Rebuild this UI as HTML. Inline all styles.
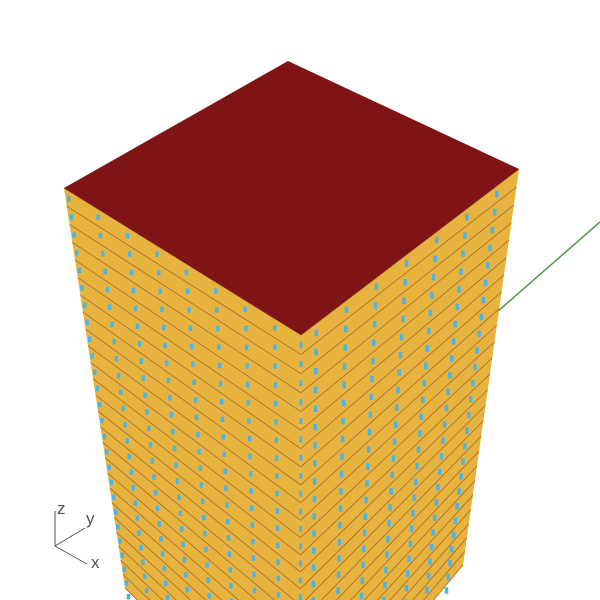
<!DOCTYPE html>
<html><head><style>html,body{margin:0;padding:0;background:#fff;width:600px;height:600px;overflow:hidden}svg{display:block;overflow:hidden}</style></head>
<body>
<svg id="s" width="600" height="600" viewBox="0 0 600 600" xmlns="http://www.w3.org/2000/svg">
<defs><clipPath id="c"><rect x="0" y="0" width="600" height="600"/></clipPath></defs>
<g clip-path="url(#c)">
<line x1="497" y1="312" x2="600" y2="222" stroke="#4a9a4a" stroke-width="1.5"/>
<polygon points="64,188 301,335 300,760 125,588" fill="#e6b43e"/>
<polygon points="301,335 519,169 463,565 300,760" fill="#e6b43e"/>
<g id="g"></g>
<polygon points="64,188 288,61 519,169 301,335" fill="#7f1416"/>
</g>
<g stroke="#555" stroke-width="1"><line x1="55" y1="511" x2="55" y2="546"/><line x1="55" y1="546" x2="85" y2="528"/><line x1="55" y1="546" x2="87" y2="564"/></g>
<g font-family="Liberation Sans,sans-serif" font-size="17" fill="#555"><text x="57" y="514">z</text><text x="86" y="524">y</text><text x="91" y="568">x</text></g>
</svg>
<script>
var g=document.getElementById('g'),h='';
function L(a,b,t){return [a[0]+(b[0]-a[0])*t,a[1]+(b[1]-a[1])*t];}
var A=[64,188],B=[125,588],C=[301,335],D=[300,760],E=[519,169],F=[463,565];
var N=25;
for(var i=0;i<=N;i++){var t=i/N;t=t*(1.15-0.15*t);
var p=L(A,B,t),q=L(C,D,t),r=L(E,F,t);
h+='<line x1="'+p[0]+'" y1="'+p[1]+'" x2="'+q[0]+'" y2="'+q[1]+'" stroke="#a8662a" stroke-width="0.8"/>';
h+='<line x1="'+q[0]+'" y1="'+q[1]+'" x2="'+r[0]+'" y2="'+r[1]+'" stroke="#a8662a" stroke-width="0.8"/>';
var t2=(i+0.5)/N;t2=t2*(1.15-0.15*t2);
var p2=L(A,B,t2),q2=L(C,D,t2),r2=L(E,F,t2);
for(var k=0;k<=7;k++){var u=(k+0.1)/8;var w=L(p2,q2,u);
h+='<rect x="'+(w[0]-1.5)+'" y="'+(w[1]-3)+'" width="3.5" height="5.5" fill="#4ab4e8"/>';}
h+='<rect x="'+(q2[0]-1.5)+'" y="'+(q2[1]-3)+'" width="3" height="6" fill="#4ab4e8"/>';
for(var k=0;k<=6;k++){var u=(k+0.5)/7.2;var w=L(q2,r2,u);
h+='<rect x="'+(w[0]-1.5)+'" y="'+(w[1]-3.5)+'" width="3.5" height="6.5" fill="#4ab4e8"/>';}
}
g.innerHTML=h;
</script>
</body></html>
